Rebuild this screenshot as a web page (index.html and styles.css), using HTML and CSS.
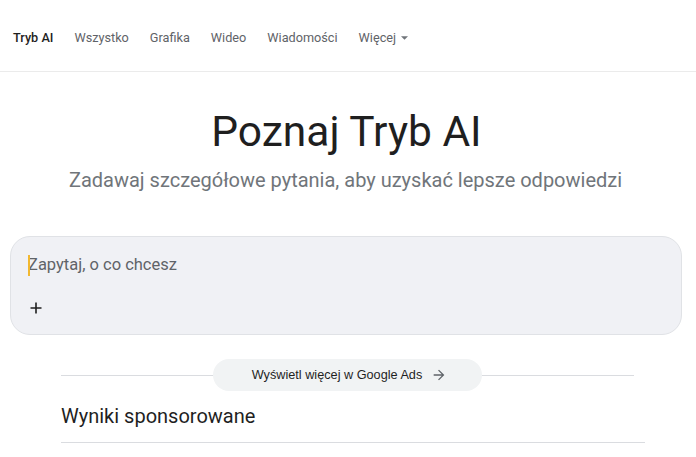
FILE: index.html
```html
<!DOCTYPE html>
<html lang="pl">
<head>
<meta charset="utf-8">
<title>Tryb AI</title>
<link rel="stylesheet" href="styles.css">
</head>
<body>
<header class="nav">
  <span class="tab active">Tryb AI</span>
  <span class="tab">Wszystko</span>
  <span class="tab">Grafika</span>
  <span class="tab">Wideo</span>
  <span class="tab">Wiadomości</span>
  <span class="tab more">Więcej <svg class="caret" viewBox="0 0 8 4" width="7" height="4"><path d="M0 0h8L4 4z" fill="#70757a"/></svg></span>
</header>
<main class="main">
  <h1 class="title">Poznaj Tryb AI</h1>
  <p class="subtitle">Zadawaj szczegółowe pytania, aby uzyskać lepsze odpowiedzi</p>
  <div class="search">
    <div class="input"><span class="cursor"></span>Zapytaj, o co chcesz</div>
    <div class="tools">
      <svg width="14" height="14" viewBox="0 0 14 14"><path d="M7 1.5v11M1.5 7h11" stroke="#1f1f1f" stroke-width="1.6" fill="none"/></svg>
    </div>
  </div>
  <div class="ads-row">
    <span class="pill">Wyświetl więcej w Google Ads
      <svg width="16" height="16" viewBox="0 0 24 24"><path d="M12 4l-1.41 1.41L16.17 11H4v2h12.17l-5.58 5.59L12 20l8-8z" fill="#5f6368"/></svg>
    </span>
  </div>
  <h2 class="sponsored">Wyniki sponsorowane</h2>
</main>
</body>
</html>
```
FILE: styles.css
```css
* { box-sizing: border-box; }
body {
  margin: 0;
  background: #fff;
  font-family: Roboto, "Liberation Sans", Arial, sans-serif;
  color: #1f1f1f;
}
.nav {
  height: 72px;
  display: flex;
  align-items: center;
  gap: 21px;
  padding: 4px 0 0 13px;
  border-bottom: 1px solid #ebebeb;
  font-family: Roboto, "Liberation Sans", Arial, sans-serif;
  font-size: 12.7px;
}
.tab { color: #5f6368; }
.tab.active { color: #1f1f1f; font-weight: 500; }
.more { display: flex; align-items: center; gap: 5px; }
.caret { margin-top: 1px; }
.main { display: flex; flex-direction: column; }
.title {
  margin: 34px 0 0;
  padding-right: 3px;
  text-align: center;
  font-size: 42.5px;
  line-height: 52px;
  font-weight: 400;
  color: #1f1f1f;
}
.subtitle {
  margin: 8px 0 0;
  padding-right: 5px;
  text-align: center;
  font-size: 20px;
  line-height: 28px;
  color: #70757a;
}
.search {
  margin: 42px 14px 0 10px;
  height: 99px;
  background: #f0f1f5;
  border: 1px solid #e0e2e6;
  border-radius: 20px;
  padding: 16px 17px 0;
}
.input {
  position: relative;
  font-size: 16.5px;
  line-height: 24px;
  color: #5f6368;
}
.cursor {
  position: absolute;
  left: 0;
  top: 2px;
  width: 2px;
  height: 21px;
  background: #f2b830;
}
.tools {
  margin-top: 24px;
  padding-left: 1px;
  height: 14px;
  display: flex;
}
.ads-row {
  margin: 24px 0 0 61px;
  width: 573px;
  display: flex;
  justify-content: center;
  background: linear-gradient(#dadce0, #dadce0) left 50% / 100% 1px no-repeat;
}
.pill {
  width: 269px;
  height: 32px;
  border-radius: 16px;
  background: #f1f3f4;
  display: flex;
  align-items: center;
  justify-content: center;
  gap: 9px;
  padding-left: 4px;
  font-family: "Liberation Sans", Arial, sans-serif;
  font-size: 12.7px;
  color: #1f1f1f;
}
.sponsored {
  margin: 11px 0 0 61px;
  width: 584px;
  padding-bottom: 12px;
  border-bottom: 1px solid #dadce0;
  font-size: 20px;
  line-height: 28px;
  font-weight: 400;
  color: #1f1f1f;
}
```
